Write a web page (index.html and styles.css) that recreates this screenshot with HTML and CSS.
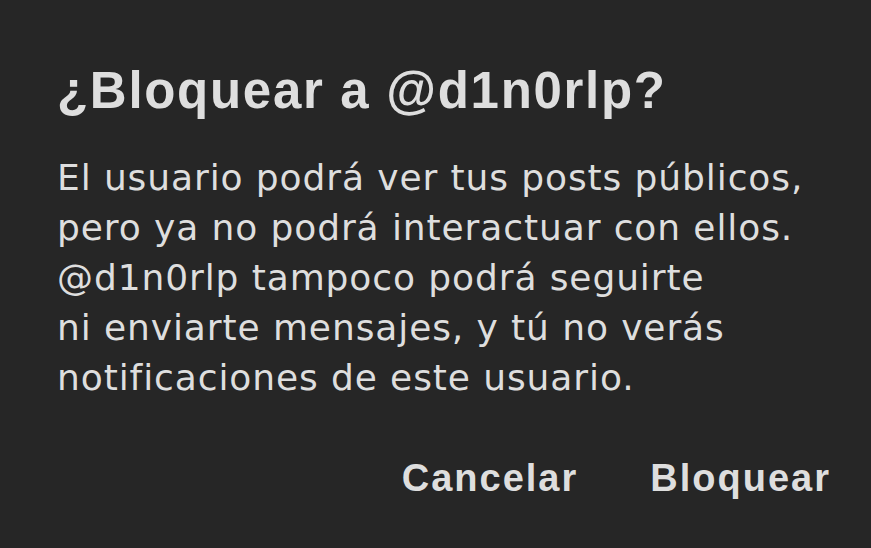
FILE: index.html
```html
<!DOCTYPE html>
<html lang="es">
<head>
    <meta charset="UTF-8">
    <meta name="viewport" content="width=device-width, initial-scale=1.0">
    <title>Bloquear usuario</title>
    <link rel="stylesheet" href="styles.css">
</head>
<body>
    <div class="dialog">
        <h1 class="dialog-title">¿Bloquear a @d1n0rlp?</h1>
        <p class="dialog-text">El usuario podrá ver tus posts públicos,<br>
        pero ya no podrá interactuar con ellos.<br>
        @d1n0rlp tampoco podrá seguirte<br>
        ni enviarte mensajes, y tú no verás<br>
        notificaciones de este usuario.</p>
        <div class="dialog-actions">
            <button type="button" class="btn">Cancelar</button>
            <button type="button" class="btn">Bloquear</button>
        </div>
    </div>
</body>
</html>
```

FILE: styles.css
```css
body {
    margin: 0;
    padding: 0;
    background-color: #262626;
    color: #dedede;
    font-family: "DejaVu Sans", sans-serif;
}
.dialog {
    padding: 59px 40px 0 57px;
}
.dialog-title {
    margin: 0;
    font-family: "Liberation Sans", Arial, sans-serif;
    font-size: 51px;
    font-weight: 700;
    letter-spacing: 1.7px;
    line-height: 64px;
}
.dialog-text {
    margin: 30px 0 0;
    font-size: 36px;
    letter-spacing: 0.9px;
    line-height: 50px;
}
.dialog-actions {
    display: flex;
    justify-content: flex-end;
    gap: 72px;
    margin-top: 54px;
}
.btn {
    background: none;
    border: none;
    padding: 0;
    color: #dedede;
    font-family: "Liberation Sans", Arial, sans-serif;
    font-size: 38px;
    font-weight: 700;
    letter-spacing: 2px;
    cursor: pointer;
}
```
